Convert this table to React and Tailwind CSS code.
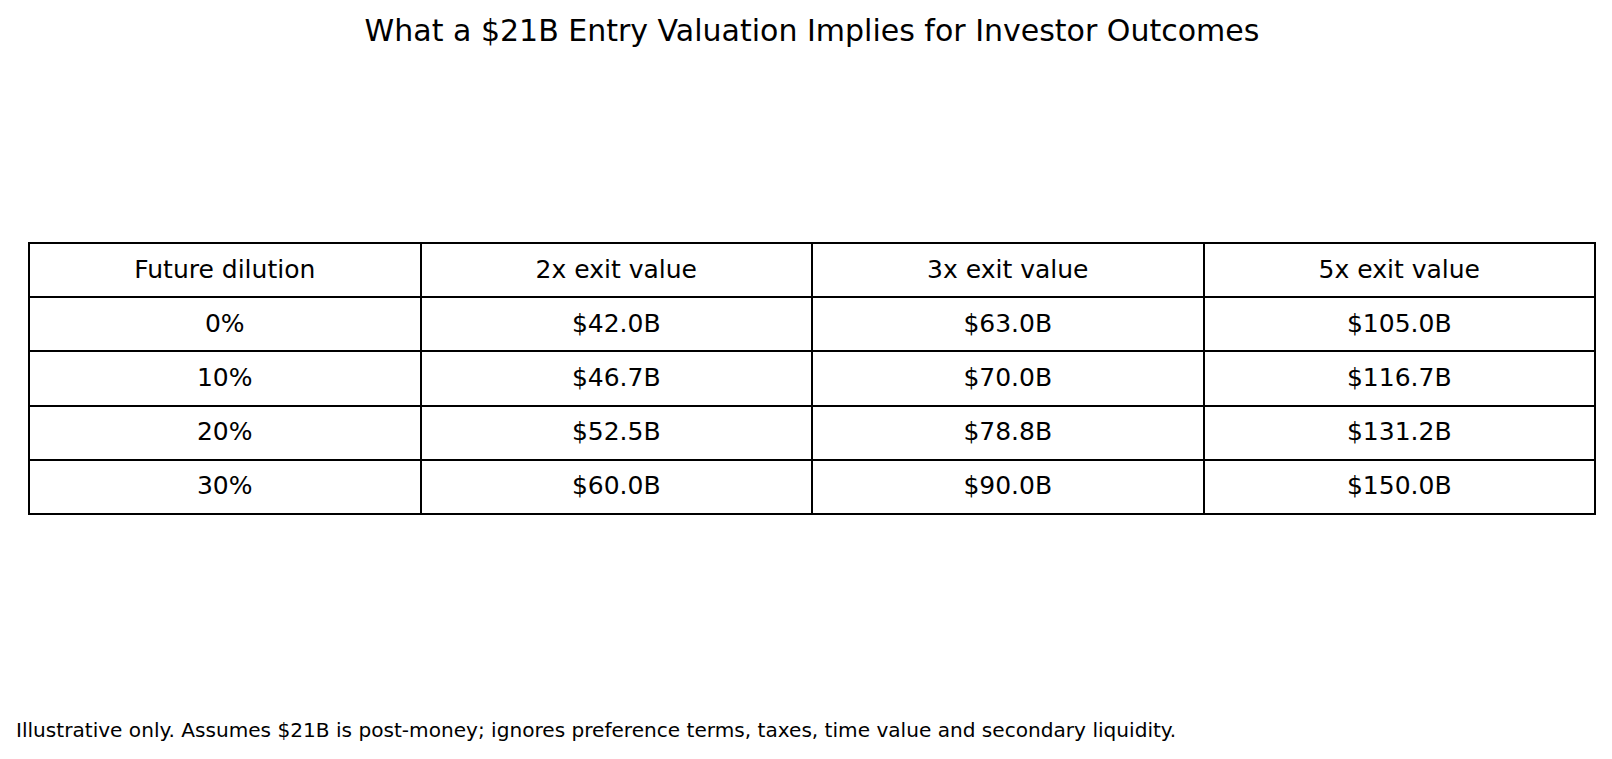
const HEADERS = ['Future dilution', '2x exit value', '3x exit value', '5x exit value'];

const ROWS = [
  ['0%', '$42.0B', '$63.0B', '$105.0B'],
  ['10%', '$46.7B', '$70.0B', '$116.7B'],
  ['20%', '$52.5B', '$78.8B', '$131.2B'],
  ['30%', '$60.0B', '$90.0B', '$150.0B'],
];

function Cell({ children }) {
  return (
    <div className="flex h-[54.2px] items-center justify-center border-r-2 border-b-2 border-black pb-[2px]">
      <span className="text-[25px] leading-none">{children}</span>
    </div>
  );
}

export default function App() {
  return (
    <div
      className="flex h-[759px] w-[1612px] flex-col bg-white text-black"
      style={{ fontFamily: '"DejaVu Sans", sans-serif' }}
    >
      {/* Title */}
      <div className="ml-[28px] w-[1568px] pt-[16px] text-center">
        <h1 className="text-[30px] font-normal leading-none">
          What a $21B Entry Valuation Implies for Investor Outcomes
        </h1>
      </div>

      {/* Table */}
      <div className="ml-[28px] mt-[196px] grid w-[1568px] grid-cols-4 border-t-2 border-l-2 border-black">
        {HEADERS.map((h) => (
          <Cell key={h}>{h}</Cell>
        ))}
        {ROWS.map((row) =>
          row.map((value, i) => <Cell key={row[0] + i}>{value}</Cell>)
        )}
      </div>

      {/* Footnote */}
      <p className="mt-[205px] pl-[16px] text-[20.1px] leading-none">
        Illustrative only. Assumes $21B is post-money; ignores preference terms, taxes, time value and secondary liquidity.
      </p>
    </div>
  );
}
